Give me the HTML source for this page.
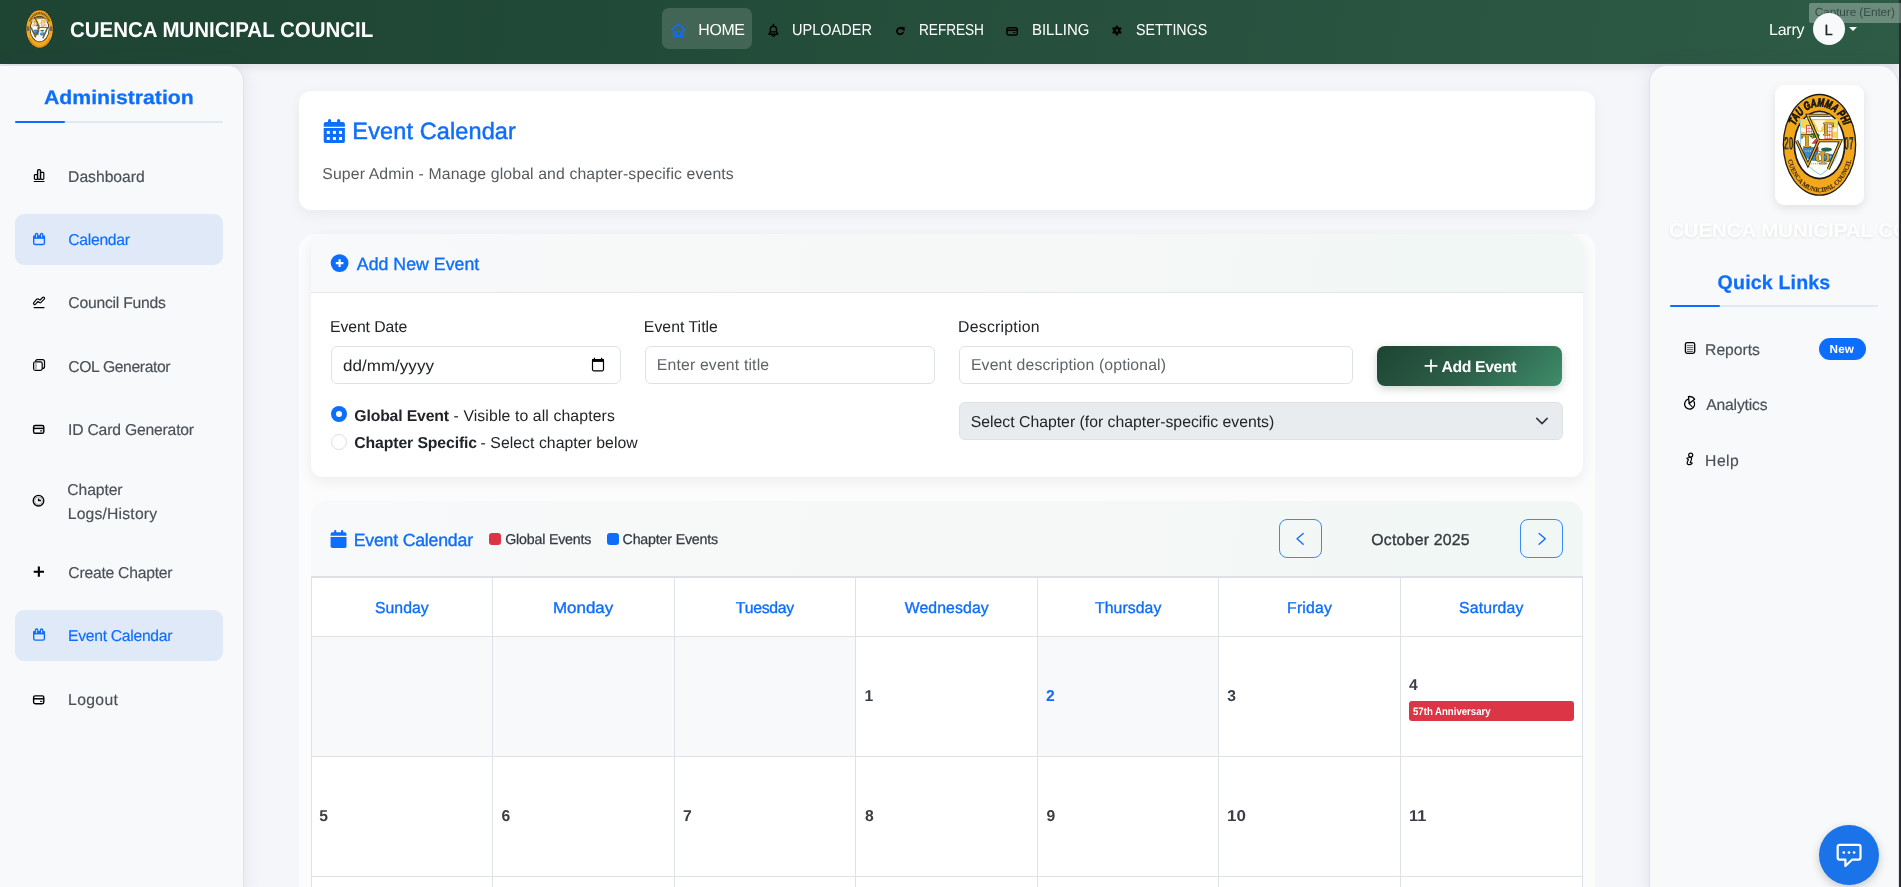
<!DOCTYPE html>
<html lang="en">
<head>
<meta charset="utf-8">
<title>Event Calendar - Cuenca Municipal Council</title>
<style>
*{box-sizing:border-box;margin:0;padding:0}
html,body{width:1901px;height:887px;overflow:hidden}
body{position:relative;background:#f4f6fa;text-rendering:geometricPrecision;font-family:"Liberation Sans",sans-serif;color:#212529}
.abs{position:absolute}
#txt{position:absolute;left:0;top:0;width:1901px;height:887px;will-change:transform}
.t{position:absolute;white-space:nowrap;line-height:30px;height:30px}
svg{position:absolute;overflow:visible}
#hdr{position:absolute;left:0;top:0;width:1899px;height:64px;background:linear-gradient(100deg,#1e4434 0%,#214937 30%,#27513e 60%,#2d5b46 100%);box-shadow:0 2px 10px rgba(0,0,0,.10)}
#homepill{position:absolute;left:662px;top:8px;width:90px;height:41px;border-radius:7px;background:rgba(255,255,255,.15)}
#lsb{position:absolute;left:-1px;top:65px;width:245px;height:830px;background:#f8f9fa;border-top-right-radius:16px;border:1px solid rgba(170,185,215,.35);box-shadow:0 0 18px rgba(60,70,100,.11)}
#rsb{position:absolute;left:1649px;top:65px;width:250px;height:830px;background:#f8f9fa;border-top-left-radius:17px;border-top-right-radius:20px;border:1px solid rgba(170,185,215,.35);box-shadow:0 0 18px rgba(60,70,100,.11)}
.act{position:absolute;left:15px;width:208px;height:51px;border-radius:9px;background:#dfe9f8}
.card{position:absolute;background:#fff;border-radius:15px}
.inp{position:absolute;height:38px;border:1px solid #dee2e6;border-radius:6px;background:#fff}
.vl{position:absolute;width:1px;background:#dee2e6;top:577px;height:320px}
.hl{position:absolute;height:1px;background:#dee2e6;left:311px;width:1272px}
.gc{position:absolute;background:#f8f9fa}
</style>
</head>
<body>
<!-- HEADER -->
<div id="hdr">
  <div id="homepill"></div>
  <div class="abs" style="left:1809px;top:3.2px;width:90px;height:19.6px;border-radius:2px 0 0 2px;background:rgba(255,255,255,.3)"></div>
  <div class="abs" style="left:0;top:0;width:1899px;height:64px;will-change:transform"><span class="t" id="cap" style="left:1814.84px;top:-2.68px;font-size:11.8px;color:rgba(28,48,42,.7);letter-spacing:-0.094px;">Capture (Enter)</span></div>
  <div class="abs" style="left:1813px;top:13.2px;width:32px;height:32px;border-radius:50%;background:#f8f9fa"></div>
  <div class="abs" style="left:1849px;top:27.1px;width:0;height:0;border-left:4px solid transparent;border-right:4px solid transparent;border-top:4px solid #fff"></div>
</div>
<div class="abs" style="left:1899px;top:0;width:2px;height:887px;background:#2b2b2b;z-index:50"></div>
<div class="abs" style="left:1899px;top:3.2px;width:2px;height:19.6px;background:#6b6b6b;z-index:51"></div>

<!-- LEFT SIDEBAR -->
<div id="lsb">
  <div class="abs" style="left:15px;top:54.5px;width:208px;height:2.5px;background:#e2e8f1;border-radius:2px"></div>
  <div class="abs" style="left:15px;top:54.5px;width:50px;height:2.5px;background:#0d6efd;border-radius:2px"></div>
  <div class="act" style="top:148px"></div>
  <div class="act" style="top:544px"></div>
</div>

<!-- MAIN -->
<div class="card" id="c1" style="left:299px;top:91px;width:1296px;height:119px;border-radius:12px;box-shadow:0 4px 14px rgba(20,25,40,.055)"></div>
<div class="abs" id="wrap" style="left:299px;top:234px;width:1296px;height:700px;background:#fcfcfd;border-radius:17px 15px 0 0"></div>

<div class="card" id="c2" style="left:311px;top:234px;width:1272px;height:243px;border-radius:15px 15px 12px 12px;box-shadow:0 4px 14px rgba(20,25,40,.07);overflow:hidden">
  <div class="abs" style="left:0;top:0;width:1272px;height:59px;background:linear-gradient(100deg,#f8f9fa 0%,#f6f8f8 50%,#f0f7f4 100%);border-bottom:1px solid #e3e7ea"></div>
  <div class="inp" style="left:20px;top:112px;width:290px"></div>
  <div class="inp" style="left:334px;top:112px;width:290px"></div>
  <div class="inp" style="left:648px;top:112px;width:394px"></div>
  <div class="abs" style="left:1066px;top:112px;width:185px;height:40px;border-radius:8px;background:linear-gradient(135deg,#1e4434 0%,#2c5f48 50%,#3f8d6b 100%);box-shadow:0 3px 9px rgba(30,70,52,.22)"></div>
  <div class="abs" style="left:20px;top:171.9px;width:16.2px;height:16.2px;border-radius:50%;background:#0d6efd"></div>
  <div class="abs" style="left:24.7px;top:176.6px;width:6.8px;height:6.8px;border-radius:50%;background:#fff"></div>
  <div class="abs" style="left:20px;top:200px;width:16px;height:16px;border-radius:50%;background:#fff;border:1px solid #dee2e6"></div>
  <div class="abs" style="left:648px;top:168px;width:604px;height:38px;border-radius:6px;background:#e9ecef;border:1px solid #dee2e6"></div>
</div>

<div class="card" id="c3" style="left:311px;top:501px;width:1272px;height:420px;border-radius:15px 15px 0 0;overflow:hidden">
  <div class="abs" style="left:0;top:0;width:1272px;height:76px;background:linear-gradient(100deg,#f8f9fa 0%,#f6f8f8 50%,#f0f7f4 100%)"></div>
  <div class="abs" style="left:178px;top:32px;width:12px;height:12px;border-radius:3px;background:#dc3545"></div>
  <div class="abs" style="left:296px;top:32px;width:12px;height:12px;border-radius:3px;background:#0d6efd"></div>
  <div class="abs" style="left:968px;top:18px;width:43px;height:39px;border:1px solid rgba(13,110,253,.8);border-radius:8px"></div>
  <div class="abs" style="left:1209px;top:18px;width:43px;height:39px;border:1px solid rgba(13,110,253,.8);border-radius:8px"></div>
</div>
<!-- grid cells bg -->
<div class="gc" style="left:311px;top:637px;width:544px;height:119px"></div>
<div class="gc" style="left:1038px;top:637px;width:180px;height:119px"></div>
<!-- grid lines -->
<div class="hl" style="top:576.4px;height:1.7px;background:#dde1e6"></div><div class="hl" style="top:636px"></div><div class="hl" style="top:756px"></div><div class="hl" style="top:876px"></div>
<div class="vl" style="left:311px"></div><div class="vl" style="left:492px"></div><div class="vl" style="left:674px"></div><div class="vl" style="left:855px"></div><div class="vl" style="left:1037px"></div><div class="vl" style="left:1218px"></div><div class="vl" style="left:1400px"></div><div class="vl" style="left:1582px"></div>
<!-- event -->
<div class="abs" style="left:1409px;top:701px;width:165px;height:20px;border-radius:3px;background:#dc3545"></div>

<!-- RIGHT SIDEBAR -->
<div id="rsb">
  <div class="abs" style="left:125px;top:19px;width:89px;height:120px;border-radius:9px;background:#fff;box-shadow:0 3px 10px rgba(0,0,0,.10)"></div>
  <div class="abs" style="left:20px;top:238.5px;width:208px;height:2.5px;background:#e2e8f1;border-radius:2px"></div>
  <div class="abs" style="left:20px;top:238.5px;width:50px;height:2.5px;background:#0d6efd;border-radius:2px"></div>
  <div class="abs" style="left:169px;top:271.5px;width:47px;height:22.5px;border-radius:11.5px;background:#0d6efd"></div>
</div>

<!-- FAB -->
<div class="abs" style="left:1819px;top:824.8px;width:60px;height:60px;border-radius:50%;background:#1a73e8;box-shadow:0 3px 10px rgba(0,0,0,.2)"></div>


<svg width="1901" height="887" viewBox="0 0 1901 887" style="left:0;top:0;pointer-events:none" fill="none">
<!-- header: home -->
<g stroke="#0d6efd" stroke-width="1.55" stroke-linejoin="round" stroke-linecap="round">
  <path d="M671.6 29.9 L678.4 24 L685.3 29.9"/>
  <path d="M673.6 30 V36.2 H683.3 V30"/>
  <path d="M676.6 36 V32.6 Q676.6 31.4 677.8 31.4 H679.2 Q680.4 31.4 680.4 32.6 V36" stroke-width="1.2"/>
</g>
<!-- bell -->
<g stroke="#000" stroke-width="1.4" stroke-linejoin="round" stroke-linecap="round">
  <path d="M769 34.2 L770.3 32 V29.6 A3.1 3.3 0 0 1 776.5 29.6 V32 L777.8 34.2 Z"/>
  <path d="M770.4 31.9 H776.4" stroke-width="1.1"/>
  <path d="M772 35.2 A1.5 1.5 0 0 0 774.8 35.2"/>
  <path d="M773.4 24.5 V25.8" stroke-width="1.6"/>
</g>
<!-- refresh -->
<g>
  <path d="M902.9 32.6 A3.15 3.15 0 1 1 902.3 28.9" stroke="#000" stroke-width="1.8" stroke-linecap="round"/>
  <path d="M900.5 27.5 L904.4 27 L904.3 31 Z" fill="#000" stroke="#000" stroke-width=".4" stroke-linejoin="round"/>
</g>
<!-- card (billing) -->
<g stroke="#000" stroke-width="1.5">
  <rect x="1006.9" y="27.7" width="10.4" height="7.2" rx="1.6"/>
  <path d="M1007 30.2 H1017.2" stroke-width="1.5"/>
  <path d="M1013.4 32.5 H1015.1" stroke-width="1.1" stroke-linecap="round"/>
</g>
<!-- gear -->
<g stroke="#000" stroke-linecap="round">
  <circle cx="1116.9" cy="30.5" r="2.3" stroke-width="2.3"/>
  <g stroke-width="2.4">
  <path d="M1116.9 27.3 V26.6"/><path d="M1116.9 33.7 V34.4"/>
  <path d="M1119.67 28.9 L1120.28 28.55"/><path d="M1114.13 32.1 L1113.52 32.45"/>
  <path d="M1119.67 32.1 L1120.28 32.45"/><path d="M1114.13 28.9 L1113.52 28.55"/>
  </g>
</g>
<!-- sidebar: dashboard -->
<g stroke="#000" stroke-width="1.2" stroke-linejoin="round">
  <rect x="34.4" y="174.6" width="3.1" height="4.7" rx=".8" fill="#fff"/>
  <rect x="37.5" y="169.7" width="3.2" height="9.6" rx="1.4" fill="#c4c4c4"/>
  <rect x="40.7" y="172.4" width="3.1" height="6.9" rx=".8" fill="#fff"/>
  <path d="M34.2 181.5 H44" stroke-width="1.2" stroke-linecap="round"/>
</g>
<!-- sidebar: calendar (active) -->
<g>
  <rect x="33.7" y="236.2" width="10.7" height="8.3" rx="1.6" stroke="#0d6efd" stroke-width="1.4"/>
  <rect x="33.2" y="235.6" width="11.7" height="3.2" fill="#0d6efd"/>
  <path d="M35.3 236 Q35.3 233.4 36.6 233.4 Q37.9 233.4 37.9 236" stroke="#0d6efd" stroke-width="1.3"/>
  <path d="M40.3 236 Q40.3 233.4 41.6 233.4 Q42.9 233.4 42.9 236" stroke="#0d6efd" stroke-width="1.3"/>
  <rect x="36.1" y="235.3" width="1" height="2" fill="#dfe9f8"/><rect x="41.1" y="235.3" width="1" height="2" fill="#dfe9f8"/>
</g>
<g transform="translate(0 395.6)">
  <rect x="33.7" y="236.2" width="10.7" height="8.3" rx="1.6" stroke="#0d6efd" stroke-width="1.4"/>
  <rect x="33.2" y="235.6" width="11.7" height="3.2" fill="#0d6efd"/>
  <path d="M35.3 236 Q35.3 233.4 36.6 233.4 Q37.9 233.4 37.9 236" stroke="#0d6efd" stroke-width="1.3"/>
  <path d="M40.3 236 Q40.3 233.4 41.6 233.4 Q42.9 233.4 42.9 236" stroke="#0d6efd" stroke-width="1.3"/>
  <rect x="36.1" y="235.3" width="1" height="2" fill="#dfe9f8"/><rect x="41.1" y="235.3" width="1" height="2" fill="#dfe9f8"/>
</g>
<!-- sidebar: chart line -->
<g stroke-linecap="round" stroke-linejoin="round">
  <path d="M34.7 303.4 L37.6 300 L40.2 301.6 L43.4 298.3" stroke="#000" stroke-width="3.5"/>
  <path d="M34.7 303.4 L37.6 300 L40.2 301.6 L43.4 298.3" stroke="#f8f9fa" stroke-width="1.2"/>
  <path d="M34.2 307.6 H44" stroke="#000" stroke-width="1.2"/>
</g>
<!-- sidebar: COL (stacked squares) -->
<g stroke="#000" stroke-width="1.2">
  <rect x="35.6" y="359.6" width="8.9" height="9" rx="2" fill="#f8f9fa"/>
  <rect x="33.6" y="361.8" width="8.6" height="8.6" rx="1.8" fill="#fff"/>
  <rect x="34.3" y="362.6" width="2.6" height="7" fill="#b5b5b5" stroke="none"/>
</g>
<!-- sidebar: id card -->
<g stroke="#000" stroke-width="1.4">
  <rect x="33.6" y="425.5" width="10.2" height="7.8" rx="1.6" fill="#fff"/>
  <path d="M33.6 428.4 H43.8" stroke-width="1.5"/>
  <path d="M40.4 430.9 H42" stroke-width="1" stroke-linecap="round"/>
</g>
<g transform="translate(0 270.4)" stroke="#000" stroke-width="1.4">
  <rect x="33.6" y="425.5" width="10.2" height="7.8" rx="1.6" fill="#fff"/>
  <path d="M33.6 428.4 H43.8" stroke-width="1.5"/>
  <path d="M40.4 430.9 H42" stroke-width="1" stroke-linecap="round"/>
</g>
<!-- sidebar: clock -->
<g>
  <circle cx="38.5" cy="500.7" r="5.3" stroke="#000" stroke-width="1.3" fill="#fff"/>
  <circle cx="38.5" cy="500.7" r="3.9" stroke="#9a9a9a" stroke-width="1"/>
  <path d="M38.6 498.4 V500.6 H41" stroke="#000" stroke-width="1.5"/>
</g>
<!-- sidebar: plus -->
<path d="M38.85 566.6 V576.8 M33.7 571.7 H44" stroke="#000" stroke-width="2.1"/>
<!-- title calendar -->
<g fill="#0d6efd">
  <rect x="328" y="119" width="3.1" height="4.5" rx="1.5"/><rect x="337.1" y="119" width="3.1" height="4.5" rx="1.5"/>
  <path d="M323.7 124.1 Q323.7 121.9 325.9 121.9 H342.7 Q344.9 121.9 344.9 124.1 V126.7 H323.7 Z"/>
  <path d="M323.7 128.1 H344.9 V140.9 Q344.9 143.1 342.7 143.1 H325.9 Q323.7 143.1 323.7 140.9 Z"/>
</g>
<g fill="#fff">
  <rect x="326.8" y="130.9" width="3" height="3"/><rect x="332.9" y="130.9" width="3" height="3"/><rect x="339" y="130.9" width="3" height="3"/>
  <rect x="326.8" y="137" width="3" height="3"/><rect x="332.9" y="137" width="3" height="3"/><rect x="339" y="137" width="3" height="3"/>
</g>
<!-- plus circle -->
<circle cx="339.6" cy="263.1" r="8.9" fill="#0d6efd"/>
<path d="M339.6 259.3 V266.9 M335.8 263.1 H343.4" stroke="#fff" stroke-width="2.1"/>
<!-- date picker -->
<g stroke="#000">
  <rect x="592.5" y="359.6" width="11" height="11.2" rx="1.2" stroke-width="1.2" fill="#fff"/>
  <rect x="592" y="359.1" width="12" height="2.8" fill="#000" stroke="none"/>
  <path d="M594.4 357.7 V359.5 M601.6 357.7 V359.5" stroke-width="1.3"/>
</g>
<!-- button plus -->
<path d="M1431 359.5 V372.3 M1424.6 365.9 H1437.4" stroke="#fff" stroke-width="1.7"/>
<!-- select chevron -->
<path d="M1536.8 418.4 L1542 423.6 L1547.2 418.4" stroke="#343a40" stroke-width="1.6" stroke-linecap="round" stroke-linejoin="round"/>
<!-- solid calendar -->
<g fill="#0d6efd">
  <rect x="334.1" y="529.9" width="2.2" height="3.6" rx="1"/><rect x="341" y="529.9" width="2.2" height="3.6" rx="1"/>
  <path d="M330.6 534.1 Q330.6 532.3 332.4 532.3 H344.7 Q346.5 532.3 346.5 534.1 V535.8 H330.6 Z"/>
  <path d="M330.6 537.1 H346.5 V546.3 Q346.5 548.1 344.7 548.1 H332.4 Q330.6 548.1 330.6 546.3 Z"/>
</g>
<!-- prev / next chevrons -->
<path d="M1303.2 533.4 L1297 538.8 L1303.2 544.2" stroke="#0d6efd" stroke-width="1.35" stroke-linecap="round" stroke-linejoin="round"/>
<path d="M1539.1 533.4 L1545.3 538.8 L1539.1 544.2" stroke="#0d6efd" stroke-width="1.35" stroke-linecap="round" stroke-linejoin="round"/>
<!-- right: reports -->
<g>
  <rect x="1685.4" y="342.7" width="9.3" height="10.7" rx="1.8" stroke="#000" stroke-width="1.3" fill="#f2f2f2"/>
  <path d="M1687.3 345.6 H1692.8 M1687.3 347.6 H1692.8 M1687.3 349.6 H1692.8 M1687.3 351.5 H1692.8" stroke="#555" stroke-width=".9" stroke-linecap="round"/>
</g>
<!-- right: analytics (pie) -->
<g stroke="#000" stroke-width="1.3" stroke-linejoin="round" stroke-linecap="round">
  <path d="M1688.4 399.2 A5 5 0 1 0 1694 401.6" fill="#fff"/>
  <path d="M1688.5 396.6 Q1692.5 396 1694.6 399.2 L1689.2 403.6 Z" fill="#fff"/>
  <path d="M1689.2 403.6 L1692.3 407" stroke-width="1.1"/>
</g>
<!-- right: help (i) -->
<g stroke="#000" stroke-width="1.2" stroke-linejoin="round">
  <circle cx="1690.7" cy="455.1" r="2" fill="#fff"/>
  <path d="M1686.9 458.3 Q1689 457.2 1691 457.6 Q1692 458 1691.4 459.6 L1690.2 462.6 Q1691.4 462.4 1692.2 463 Q1691.4 465 1688.6 464.6 Q1686.6 464.2 1687.4 462 L1688.4 459.6 Q1687.4 459.4 1686.9 458.3 Z" fill="#fff"/>
</g>
<!-- FAB chat icon -->
<g stroke="#fff" stroke-width="2.2" stroke-linejoin="round">
  <path d="M1839.6 844.9 H1858.6 Q1860.5 844.9 1860.5 846.8 V857.8 Q1860.5 859.7 1858.6 859.7 H1852 L1845.4 866 V859.7 H1839.6 Q1837.7 859.7 1837.7 857.8 V846.8 Q1837.7 844.9 1839.6 844.9 Z"/>
</g>
<g fill="#fff"><circle cx="1843.8" cy="852.5" r="1.35"/><circle cx="1849" cy="852.5" r="1.35"/><circle cx="1854.1" cy="852.5" r="1.35"/></g>
</svg>

<svg width="1901" height="887" viewBox="0 0 1901 887" style="left:0;top:0;pointer-events:none">
<g transform="translate(1819.5 144.8) scale(1.0 1.02)">
<ellipse cx="0" cy="0" rx="36.8" ry="50" fill="#1c1a14"/>
<ellipse cx="0" cy="0" rx="35.5" ry="48.7" fill="#f2a81d"/>
<ellipse cx="0" cy=".2" rx="26" ry="33.8" fill="#1c1a14"/>
<ellipse cx="0" cy=".2" rx="24.3" ry="32.1" fill="#fff"/>
<path d="M-19 -24.7 H17.9 V8 Q15 21 1.1 29.5 Q-15 21 -19 8 Z" fill="#fffef4" stroke="#8fd3ea" stroke-width="1"/>
<path d="M-18.5 -24.2 H17.4 V-6 L0 -12 L-18.5 -6 Z" fill="#f6d23e" opacity=".9"/>
<path d="M-18.5 -17 L0 -12 L17.4 -17 V-13 L0 -9 L-18.5 -13 Z" fill="#fff" opacity=".85"/>
<path d="M-6 -24 L0 -12 L6 -24" fill="#fff" opacity=".8"/>
<rect x="-13" y="-19" width="7.5" height="9" fill="#fff" stroke="#d9534f" stroke-width="1"/><path d="M-10.5 -19 V-10 M-8 -19 V-10 M-13 -16 H-5.5 M-13 -13 H-5.5" stroke="#d9534f" stroke-width=".6"/>
<rect x="5.5" y="-21" width="7" height="15" fill="#fff" stroke="#e0655a" stroke-width="1"/><path d="M8 -21 V-6 M10.3 -21 V-6 M5.5 -17 H12.5 M5.5 -13 H12.5 M5.5 -9.5 H12.5" stroke="#e0655a" stroke-width=".6"/>
<ellipse cx="-5" cy="-9.3" rx="5" ry="2.6" fill="#2f9a49"/>
<path d="M-17 3 Q-9 -1 -1 5 L-3 16 Q-11 16 -15 11 Z" fill="#3b86c9"/>
<path d="M1 10 Q8 7 16 10 L13 16 Q7 18 2 16 Z" fill="#3b86c9"/>
<path d="M-14 6 H-4 M4 12 H13" stroke="#fff" stroke-width="1" stroke-dasharray="1 1.2"/>
<ellipse cx="7" cy="4.6" rx="5.5" ry="2" fill="#25624f"/>
<path d="M-8 -1 L-4 -6 L0 -1 Z" fill="#d63b3b"/><rect x="-4" y="2" width="3" height="5" fill="#c7372f"/>
<path d="M-9 18.5 H8" stroke="#e46a6a" stroke-width="1" stroke-dasharray="1.2 1"/>
<path d="M11.1 -29 H-11.9 L-0.8 -4" fill="none" stroke="#1c1a14" stroke-width="3.1" stroke-linejoin="miter" stroke-miterlimit="6" stroke-linecap="butt"/>
<path d="M-22.9 -4 L-11.6 19.6 L-0.8 -4" fill="none" stroke="#1c1a14" stroke-width="3.1" stroke-linejoin="miter" stroke-miterlimit="6" stroke-linecap="butt"/>
<path d="M-0.8 -4 H21.2 L8.8 23.8" fill="none" stroke="#1c1a14" stroke-width="3.1" stroke-linejoin="miter" stroke-miterlimit="6" stroke-linecap="butt"/>
<path d="M11.1 -29 H-11.9 L-0.8 -4" fill="none" stroke="#e0aa25" stroke-width="1.5" stroke-linejoin="miter" stroke-miterlimit="6" stroke-linecap="butt"/>
<path d="M-22.9 -4 L-11.6 19.6 L-0.8 -4" fill="none" stroke="#e0aa25" stroke-width="1.5" stroke-linejoin="miter" stroke-miterlimit="6" stroke-linecap="butt"/>
<path d="M-0.8 -4 H21.2 L8.8 23.8" fill="none" stroke="#e0aa25" stroke-width="1.5" stroke-linejoin="miter" stroke-miterlimit="6" stroke-linecap="butt"/>
<path id="lga" d="M-28.3 0 A28.3 37.6 0 0 1 28.3 0" fill="none"/>
<path id="lgb" d="M-33.6 0 A33.6 46.4 0 0 0 33.6 0" fill="none"/>
<text font-family="Liberation Sans, sans-serif" font-weight="700" font-style="italic" font-size="11.4" fill="#17150f" stroke="#17150f" stroke-width=".8" textLength="65.4" lengthAdjust="spacingAndGlyphs"><textPath href="#lga" startOffset="50%" text-anchor="middle" textLength="65.4" lengthAdjust="spacingAndGlyphs">TAU GAMMA PHI</textPath></text>
<text font-family="Liberation Serif, serif" font-weight="700" font-size="6.4" fill="#4a3208" stroke="#4a3208" stroke-width=".15"><textPath href="#lgb" startOffset="50%" text-anchor="middle" textLength="96.0" lengthAdjust="spacing">CUENCA MUNICIPAL COUNCIL</textPath></text>
<text x="-35.2" y="3.9" font-family="Liberation Sans, sans-serif" font-weight="700" font-size="16.6" textLength="8.8" lengthAdjust="spacingAndGlyphs" fill="#17150f" stroke="#17150f" stroke-width=".5">20</text>
<text x="-34.300000000000004" y="2.7" font-family="Liberation Sans, sans-serif" font-weight="400" font-size="13.4" textLength="7" lengthAdjust="spacingAndGlyphs" fill="none" stroke="#fff3cf" stroke-width=".3" opacity=".8">20</text>
<text x="25.1" y="3.9" font-family="Liberation Sans, sans-serif" font-weight="700" font-size="16.6" textLength="8.8" lengthAdjust="spacingAndGlyphs" fill="#17150f" stroke="#17150f" stroke-width=".5">07</text>
<text x="26.0" y="2.7" font-family="Liberation Sans, sans-serif" font-weight="400" font-size="13.4" textLength="7" lengthAdjust="spacingAndGlyphs" fill="none" stroke="#fff3cf" stroke-width=".3" opacity=".8">07</text>
<text x="-12.3" y="2.2" font-size="18.5" font-family="Liberation Serif, serif" font-weight="700" fill="#dba524" stroke="#1c1a14" stroke-width=".7" paint-order="stroke" text-anchor="middle">T</text>
<text x="9.2" y="-9.8" font-size="18" font-family="Liberation Serif, serif" font-weight="700" fill="#dba524" stroke="#1c1a14" stroke-width=".7" paint-order="stroke" text-anchor="middle">Γ</text>
<text x="3" y="18.6" font-size="19" font-family="Liberation Serif, serif" font-weight="700" fill="#dba524" stroke="#1c1a14" stroke-width=".7" paint-order="stroke" text-anchor="middle">Φ</text>
</g>
<g transform="translate(39.6 29.05) scale(0.37500000000000006 0.385)">
<ellipse cx="0" cy="0" rx="36.8" ry="50" fill="#1c1a14"/>
<ellipse cx="0" cy="0" rx="35.5" ry="48.7" fill="#f2a81d"/>
<ellipse cx="0" cy=".2" rx="26" ry="33.8" fill="#1c1a14"/>
<ellipse cx="0" cy=".2" rx="24.3" ry="32.1" fill="#fff"/>
<path d="M-19 -24.7 H17.9 V8 Q15 21 1.1 29.5 Q-15 21 -19 8 Z" fill="#fffef4" stroke="#8fd3ea" stroke-width="1"/>
<path d="M-18.5 -24.2 H17.4 V-6 L0 -12 L-18.5 -6 Z" fill="#f6d23e" opacity=".9"/>
<path d="M-18.5 -17 L0 -12 L17.4 -17 V-13 L0 -9 L-18.5 -13 Z" fill="#fff" opacity=".85"/>
<path d="M-6 -24 L0 -12 L6 -24" fill="#fff" opacity=".8"/>
<rect x="-13" y="-19" width="7.5" height="9" fill="#fff" stroke="#d9534f" stroke-width="1"/><path d="M-10.5 -19 V-10 M-8 -19 V-10 M-13 -16 H-5.5 M-13 -13 H-5.5" stroke="#d9534f" stroke-width=".6"/>
<rect x="5.5" y="-21" width="7" height="15" fill="#fff" stroke="#e0655a" stroke-width="1"/><path d="M8 -21 V-6 M10.3 -21 V-6 M5.5 -17 H12.5 M5.5 -13 H12.5 M5.5 -9.5 H12.5" stroke="#e0655a" stroke-width=".6"/>
<ellipse cx="-5" cy="-9.3" rx="5" ry="2.6" fill="#2f9a49"/>
<path d="M-17 3 Q-9 -1 -1 5 L-3 16 Q-11 16 -15 11 Z" fill="#3b86c9"/>
<path d="M1 10 Q8 7 16 10 L13 16 Q7 18 2 16 Z" fill="#3b86c9"/>
<path d="M-14 6 H-4 M4 12 H13" stroke="#fff" stroke-width="1" stroke-dasharray="1 1.2"/>
<ellipse cx="7" cy="4.6" rx="5.5" ry="2" fill="#25624f"/>
<path d="M-8 -1 L-4 -6 L0 -1 Z" fill="#d63b3b"/><rect x="-4" y="2" width="3" height="5" fill="#c7372f"/>
<path d="M-9 18.5 H8" stroke="#e46a6a" stroke-width="1" stroke-dasharray="1.2 1"/>
<path d="M11.1 -29 H-11.9 L-0.8 -4" fill="none" stroke="#1c1a14" stroke-width="3.1" stroke-linejoin="miter" stroke-miterlimit="6" stroke-linecap="butt"/>
<path d="M-22.9 -4 L-11.6 19.6 L-0.8 -4" fill="none" stroke="#1c1a14" stroke-width="3.1" stroke-linejoin="miter" stroke-miterlimit="6" stroke-linecap="butt"/>
<path d="M-0.8 -4 H21.2 L8.8 23.8" fill="none" stroke="#1c1a14" stroke-width="3.1" stroke-linejoin="miter" stroke-miterlimit="6" stroke-linecap="butt"/>
<path d="M11.1 -29 H-11.9 L-0.8 -4" fill="none" stroke="#e0aa25" stroke-width="1.5" stroke-linejoin="miter" stroke-miterlimit="6" stroke-linecap="butt"/>
<path d="M-22.9 -4 L-11.6 19.6 L-0.8 -4" fill="none" stroke="#e0aa25" stroke-width="1.5" stroke-linejoin="miter" stroke-miterlimit="6" stroke-linecap="butt"/>
<path d="M-0.8 -4 H21.2 L8.8 23.8" fill="none" stroke="#e0aa25" stroke-width="1.5" stroke-linejoin="miter" stroke-miterlimit="6" stroke-linecap="butt"/>
<path d="M-26 -20 A29.5 40.5 0 0 1 26 -20" fill="none" stroke="#3b3520" stroke-width="6" stroke-dasharray="2.6 1.7" opacity=".8"/>
<path d="M-27 24 A30.5 43 0 0 0 27 24" fill="none" stroke="#8c6d22" stroke-width="3.4" stroke-dasharray="1.7 1.5" opacity=".75"/>
<rect x="-34" y="-7" width="6.5" height="12" fill="#5e5e50" opacity=".85"/><rect x="27.5" y="-7" width="6.5" height="12" fill="#5e5e50" opacity=".85"/>
</g>
</svg>
<div id="txt">
<span class="t" id="brand" style="left:69.77px;top:14.60px;font-size:21.5px;color:#fff;font-weight:700;transform:scaleX(0.9519);transform-origin:0 0;">CUENCA MUNICIPAL COUNCIL</span>
<span class="t" id="n1" style="left:698.34px;top:16.06px;font-size:15.9px;color:#fff;letter-spacing:-0.343px;">HOME</span>
<span class="t" id="n2" style="left:792.22px;top:16.06px;font-size:15.9px;color:#fff;transform:scaleX(0.9142);transform-origin:0 0;">UPLOADER</span>
<span class="t" id="n3" style="left:919.43px;top:16.06px;font-size:15.9px;color:#fff;letter-spacing:-0.061px;transform:scaleX(0.8600);transform-origin:0 0;">REFRESH</span>
<span class="t" id="n4" style="left:1032.12px;top:16.06px;font-size:15.9px;color:#fff;transform:scaleX(0.9407);transform-origin:0 0;">BILLING</span>
<span class="t" id="n5" style="left:1136.28px;top:16.06px;font-size:15.9px;color:#fff;transform:scaleX(0.8967);transform-origin:0 0;">SETTINGS</span>
<span class="t" id="usr" style="left:1769.04px;top:15.96px;font-size:15.9px;color:#fff;letter-spacing:-0.185px;">Larry</span>
<span class="t" id="av" style="left:1824.48px;top:15.67px;font-size:14.8px;color:#212529;-webkit-text-stroke:0.25px #212529;">L</span>
<span class="t" id="adm" style="left:44.16px;top:83.30px;font-size:19.6px;color:#0d6efd;font-weight:700;-webkit-text-stroke:0.25px #0d6efd;transform:scaleX(1.0832);transform-origin:0 0;">Administration</span>
<span class="t" id="m1" style="left:68.10px;top:162.87px;font-size:15.7px;color:#495057;-webkit-text-stroke:0.17px #495057;letter-spacing:-0.022px;">Dashboard</span>
<span class="t" id="m2" style="left:68.34px;top:226.17px;font-size:15.7px;color:#0d6efd;-webkit-text-stroke:0.17px #0d6efd;letter-spacing:-0.292px;">Calendar</span>
<span class="t" id="m3" style="left:68.34px;top:289.27px;font-size:15.7px;color:#495057;-webkit-text-stroke:0.17px #495057;letter-spacing:-0.229px;">Council Funds</span>
<span class="t" id="m4" style="left:68.34px;top:352.67px;font-size:15.7px;color:#495057;-webkit-text-stroke:0.17px #495057;letter-spacing:-0.370px;">COL Generator</span>
<span class="t" id="m5" style="left:67.97px;top:415.77px;font-size:15.7px;color:#495057;-webkit-text-stroke:0.17px #495057;letter-spacing:-0.183px;">ID Card Generator</span>
<span class="t" id="m6a" style="left:67.34px;top:475.57px;font-size:15.7px;color:#495057;-webkit-text-stroke:0.17px #495057;letter-spacing:-0.091px;">Chapter</span>
<span class="t" id="m6b" style="left:67.71px;top:499.57px;font-size:15.7px;color:#495057;-webkit-text-stroke:0.17px #495057;letter-spacing:0.198px;">Logs/History</span>
<span class="t" id="m7" style="left:68.34px;top:558.67px;font-size:15.7px;color:#495057;-webkit-text-stroke:0.17px #495057;letter-spacing:-0.237px;">Create Chapter</span>
<span class="t" id="m8" style="left:68.11px;top:621.67px;font-size:15.7px;color:#0d6efd;-webkit-text-stroke:0.17px #0d6efd;letter-spacing:-0.296px;">Event Calendar</span>
<span class="t" id="m9" style="left:68.11px;top:685.57px;font-size:15.7px;color:#495057;-webkit-text-stroke:0.17px #495057;letter-spacing:0.356px;">Logout</span>
<span class="t" id="title" style="left:352.35px;top:116.02px;font-size:23.5px;color:#0d6efd;-webkit-text-stroke:0.45px #0d6efd;letter-spacing:0.117px;">Event Calendar</span>
<span class="t" id="sub" style="left:322.25px;top:159.68px;font-size:15.8px;color:#565b60;letter-spacing:0.123px;">Super Admin - Manage global and chapter-specific events</span>
<span class="t" id="ane" style="left:356.82px;top:248.62px;font-size:17.7px;color:#0d6efd;-webkit-text-stroke:0.36px #0d6efd;letter-spacing:0.043px;">Add New Event</span>
<span class="t" id="l1" style="left:329.94px;top:313.08px;font-size:15.8px;color:#212529;letter-spacing:-0.093px;">Event Date</span>
<span class="t" id="l2" style="left:643.84px;top:313.08px;font-size:15.8px;color:#212529;letter-spacing:0.032px;">Event Title</span>
<span class="t" id="l3" style="left:958.04px;top:313.08px;font-size:15.8px;color:#212529;letter-spacing:0.256px;">Description</span>
<span class="t" id="p1" style="left:342.85px;top:351.88px;font-size:15.8px;color:#212529;transform:scaleX(1.0791);transform-origin:0 0;">dd/mm/yyyy</span>
<span class="t" id="p2" style="left:656.84px;top:351.48px;font-size:15.8px;color:#5f6469;letter-spacing:0.158px;">Enter event title</span>
<span class="t" id="p3" style="left:970.94px;top:351.48px;font-size:15.8px;color:#5f6469;letter-spacing:0.136px;">Event description (optional)</span>
<span class="t" id="btn" style="left:1441.59px;top:352.71px;font-size:15.8px;color:#fff;font-weight:700;letter-spacing:-0.403px;">Add Event</span>
<span class="t" id="r1a" style="left:354.32px;top:401.61px;font-size:15.8px;color:#212529;font-weight:700;letter-spacing:-0.166px;">Global Event</span>
<span class="t" id="r1b" style="left:453.50px;top:401.68px;font-size:15.8px;color:#212529;letter-spacing:0.113px;">- Visible to all chapters</span>
<span class="t" id="r2a" style="left:354.32px;top:429.31px;font-size:15.8px;color:#212529;font-weight:700;letter-spacing:-0.123px;">Chapter Specific</span>
<span class="t" id="r2b" style="left:480.60px;top:429.38px;font-size:15.8px;color:#212529;letter-spacing:0.040px;">- Select chapter below</span>
<span class="t" id="sel" style="left:970.75px;top:407.78px;font-size:15.8px;color:#212529;letter-spacing:-0.007px;">Select Chapter (for chapter-specific events)</span>
<span class="t" id="ch" style="left:353.68px;top:525.02px;font-size:17.7px;color:#0d6efd;-webkit-text-stroke:0.36px #0d6efd;letter-spacing:-0.198px;">Event Calendar</span>
<span class="t" id="lg1" style="left:505.15px;top:525.00px;font-size:14.2px;color:#343a40;-webkit-text-stroke:0.25px #343a40;letter-spacing:-0.172px;">Global Events</span>
<span class="t" id="lg2" style="left:622.55px;top:525.00px;font-size:14.2px;color:#343a40;-webkit-text-stroke:0.25px #343a40;letter-spacing:-0.165px;">Chapter Events</span>
<span class="t" id="mon" style="left:1371.30px;top:525.75px;font-size:15.8px;color:#343a40;-webkit-text-stroke:0.35px #343a40;letter-spacing:0.237px;">October 2025</span>
<span class="t" id="d0" style="left:375.03px;top:593.65px;font-size:15.8px;color:#0d6efd;-webkit-text-stroke:0.35px #0d6efd;letter-spacing:0.016px;">Sunday</span>
<span class="t" id="d1" style="left:553.20px;top:593.65px;font-size:15.8px;color:#0d6efd;-webkit-text-stroke:0.35px #0d6efd;transform:scaleX(1.0720);transform-origin:0 0;">Monday</span>
<span class="t" id="d2" style="left:735.85px;top:593.65px;font-size:15.8px;color:#0d6efd;-webkit-text-stroke:0.35px #0d6efd;letter-spacing:-0.267px;">Tuesday</span>
<span class="t" id="d3" style="left:904.67px;top:593.65px;font-size:15.8px;color:#0d6efd;-webkit-text-stroke:0.35px #0d6efd;letter-spacing:0.119px;">Wednesday</span>
<span class="t" id="d4" style="left:1094.95px;top:593.65px;font-size:15.8px;color:#0d6efd;-webkit-text-stroke:0.35px #0d6efd;letter-spacing:0.086px;">Thursday</span>
<span class="t" id="d5" style="left:1287.08px;top:593.65px;font-size:15.8px;color:#0d6efd;-webkit-text-stroke:0.35px #0d6efd;letter-spacing:0.173px;">Friday</span>
<span class="t" id="d6" style="left:1459.03px;top:593.65px;font-size:15.8px;color:#0d6efd;-webkit-text-stroke:0.35px #0d6efd;letter-spacing:0.170px;">Saturday</span>
<span class="t" id="k1" style="left:864.38px;top:682.11px;font-size:15.7px;color:#3a3f45;font-weight:700;">1</span>
<span class="t" id="k2" style="left:1046.02px;top:682.11px;font-size:15.7px;color:#0d6efd;font-weight:700;">2</span>
<span class="t" id="k3" style="left:1227.30px;top:682.11px;font-size:15.7px;color:#3a3f45;font-weight:700;">3</span>
<span class="t" id="k4" style="left:1408.98px;top:670.81px;font-size:15.7px;color:#3a3f45;font-weight:700;">4</span>
<span class="t" id="k5" style="left:319.35px;top:801.81px;font-size:15.7px;color:#3a3f45;font-weight:700;">5</span>
<span class="t" id="k6" style="left:501.47px;top:801.81px;font-size:15.7px;color:#3a3f45;font-weight:700;">6</span>
<span class="t" id="k7" style="left:683.12px;top:801.81px;font-size:15.7px;color:#3a3f45;font-weight:700;">7</span>
<span class="t" id="k8" style="left:864.92px;top:801.81px;font-size:15.7px;color:#3a3f45;font-weight:700;">8</span>
<span class="t" id="k9" style="left:1046.59px;top:801.81px;font-size:15.7px;color:#3a3f45;font-weight:700;">9</span>
<span class="t" id="k10" style="left:1227.19px;top:801.81px;font-size:15.7px;color:#3a3f45;font-weight:700;transform:scaleX(1.0813);transform-origin:0 0;">10</span>
<span class="t" id="k11" style="left:1409.24px;top:801.81px;font-size:15.7px;color:#3a3f45;font-weight:700;transform:scaleX(1.0394);transform-origin:0 0;">11</span>
<span class="t" id="ev" style="left:1412.66px;top:696.94px;font-size:10.8px;color:#fff;font-weight:700;transform:scaleX(0.8892);transform-origin:0 0;">57th Anniversary</span>
<span class="t" id="ql" style="left:1717.61px;top:267.90px;font-size:19.6px;color:#0d6efd;font-weight:700;-webkit-text-stroke:0.25px #0d6efd;letter-spacing:0.159px;">Quick Links</span>
<span class="t" id="q1" style="left:1705.10px;top:335.77px;font-size:15.7px;color:#495057;-webkit-text-stroke:0.17px #495057;letter-spacing:-0.024px;">Reports</span>
<span class="t" id="q2" style="left:1706.14px;top:390.87px;font-size:15.7px;color:#495057;-webkit-text-stroke:0.17px #495057;letter-spacing:-0.160px;">Analytics</span>
<span class="t" id="q3" style="left:1705.11px;top:446.57px;font-size:15.7px;color:#495057;-webkit-text-stroke:0.17px #495057;letter-spacing:0.441px;">Help</span>
<span class="t" id="new" style="left:1829.56px;top:334.84px;font-size:11.7px;color:#fff;font-weight:700;letter-spacing:0.178px;">New</span>
<div class="abs" style="left:0;top:0;width:1898px;height:887px;overflow:hidden"><span class="t" id="rb" style="left:1669.41px;top:216.10px;font-size:19.6px;color:#fff;font-weight:700;transform:scaleX(1.0415);transform-origin:0 0;text-shadow:0 1px 3px rgba(0,0,0,.10)">CUENCA MUNICIPAL COUNCIL</span></div>
</div>
</body>
</html>
